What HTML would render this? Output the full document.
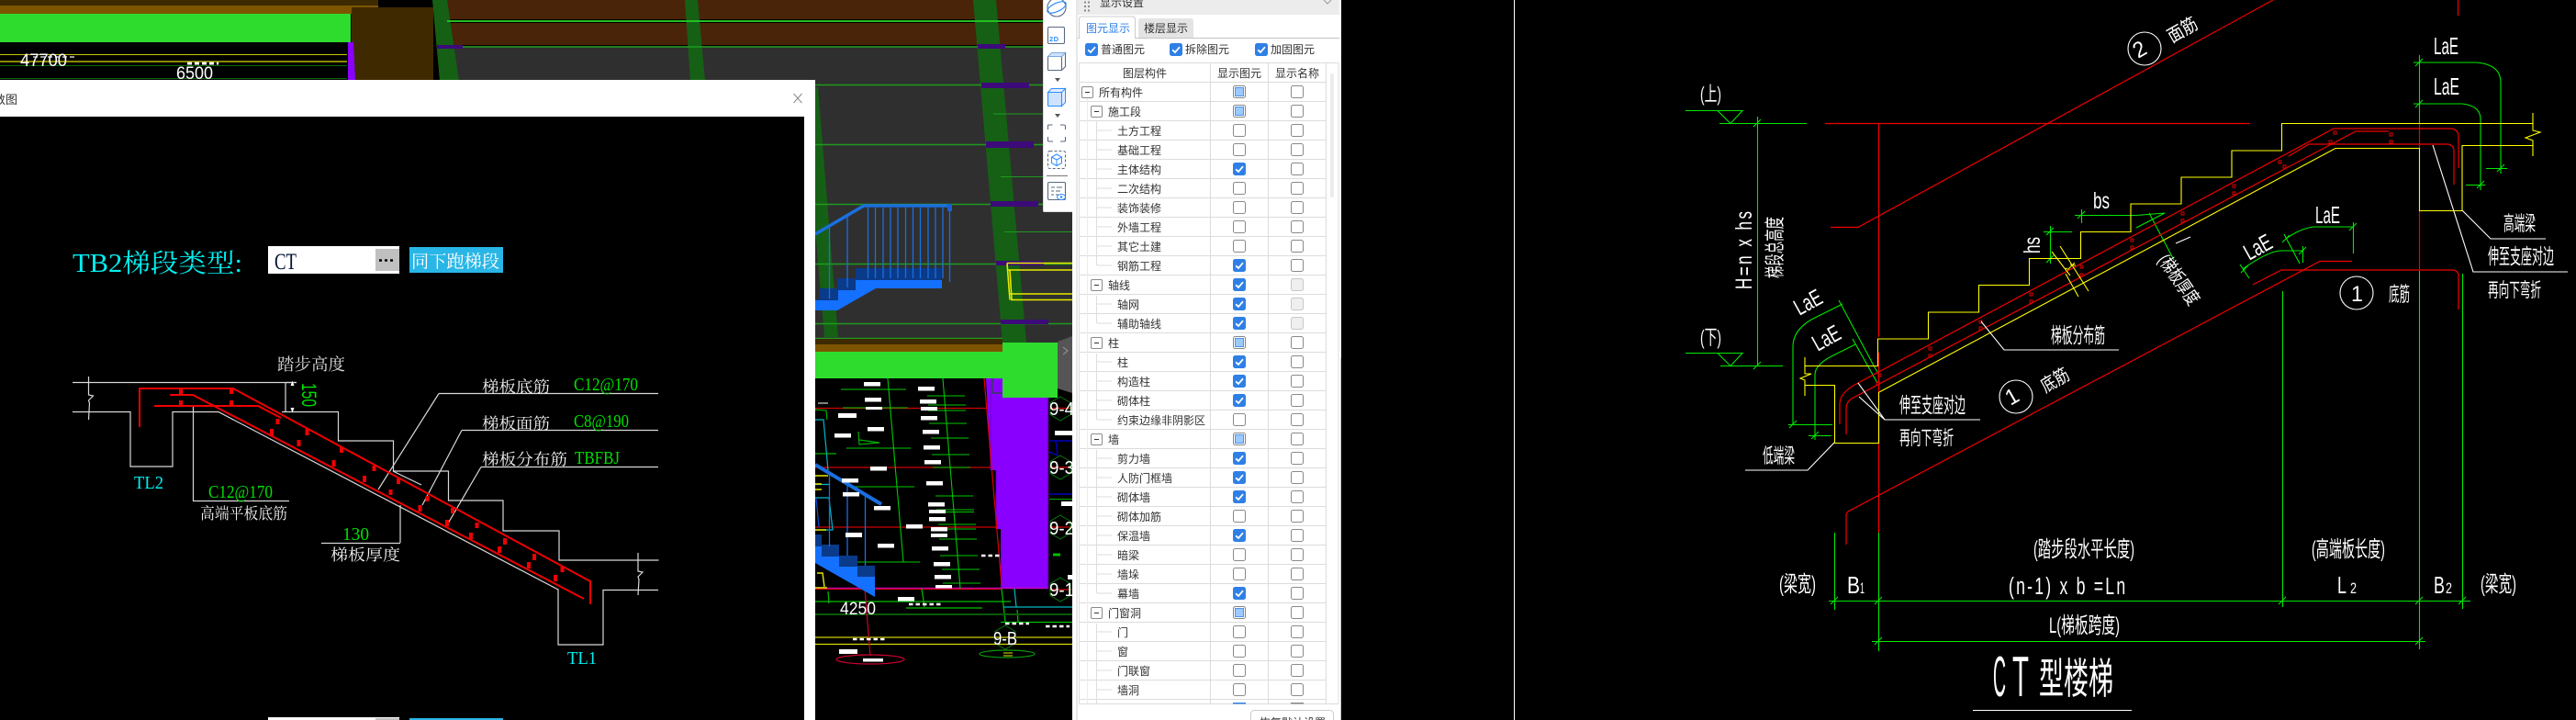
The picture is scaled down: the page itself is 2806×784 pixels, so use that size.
<!DOCTYPE html>
<html lang="zh"><head><meta charset="utf-8"><title>CT型楼梯</title>
<style>
html,body{margin:0;padding:0;background:#000;width:2806px;height:784px;overflow:hidden}
svg{display:block;position:absolute;left:0;top:0}
text{font-family:"Liberation Sans","Noto Sans CJK SC",sans-serif}
text.s,.s text{font-family:"Liberation Serif","Noto Serif CJK SC",serif}
.u{font-size:12px;fill:#333;font-family:"Liberation Sans","Noto Sans CJK SC",sans-serif}
.w{fill:#fff}
.g{fill:#00e000}
.c{fill:#00f0f0}
.n{fill:none}
</style></head><body>
<svg width="2806" height="784" viewBox="0 0 2806 784" xmlns="http://www.w3.org/2000/svg">
<defs>
<g id="cn"><rect x=".5" y=".5" width="13" height="13" rx="2" fill="#fff" stroke="#8a8a8a"/></g>
<g id="cy"><rect x=".5" y=".5" width="13" height="13" rx="2" fill="#2f80e6" stroke="#2f80e6"/><path d="M3.2 7.3L6 10 11 4.2" fill="none" stroke="#fff" stroke-width="1.8"/></g>
<g id="cp"><rect x=".5" y=".5" width="13" height="13" rx="2" fill="#fff" stroke="#858585"/><rect x="2.5" y="2.5" width="9" height="9" fill="#9ccaff" stroke="#4a94f0"/></g>
<g id="cd"><rect x=".5" y=".5" width="13" height="13" rx="2" fill="#efefef" stroke="#c8c8c8"/></g>
<g id="ex"><rect x=".5" y=".5" width="12" height="12" rx="1.5" fill="#fff" stroke="#8a8a8a"/><path d="M4 6.5h5" stroke="#333"/></g>
<polygon id="hex" points="0,-13 11,-6.5 11,6.5 0,13 -11,6.5 -11,-6.5" fill="none" stroke="#0a7a0a"/>
<pattern id="rows" x="0" y="89" width="10" height="21" patternUnits="userSpaceOnUse"><rect width="10" height="1" fill="#dcdcdc"/></pattern>
</defs>
<rect width="2806" height="784" fill="#000"/>

<!-- top-left 3D -->
<rect x="0" y="0" width="412" height="6" fill="#3d2a00"/>
<rect x="0" y="6" width="412" height="9" fill="#7d5500"/>
<rect x="0" y="15" width="382" height="31" fill="#2edc2e"/>
<rect x="383" y="8" width="89" height="80" fill="#3f2900"/>
<path d="M379 46h6l2 42h-8z" fill="#8a00ff"/>
<path d="M0 59.5h378" stroke="#c8c800"/><path d="M0 67h378" stroke="#8a8a00" stroke-width="2"/>
<path d="M0 71.5h378M0 85.5h378" stroke="#0a6a0a"/>
<text class="w" x="22" y="72" font-size="19" textLength="51" lengthAdjust="spacingAndGlyphs">47700</text>
<text class="w" x="192" y="86" font-size="19" textLength="40" lengthAdjust="spacingAndGlyphs">6500</text>
<path d="M204 69h34" stroke="#fff" stroke-width="3" stroke-dasharray="5 3"/>
<path d="M36 62h46" stroke="#fff" stroke-width="2" stroke-dasharray="5 3" opacity=".6"/>

<rect x="487" y="0" width="681" height="21" fill="#4a2408"/>
<rect x="487" y="25" width="681" height="24" fill="#4a2408"/>
<rect x="480" y="50" width="688" height="325" fill="#2f2f2f"/>
<path d="M471 0h16l13 88h-21z" fill="#156015"/>
<path d="M746 0h14l8 88h-16z" fill="#156015"/>
<path d="M888 95h3l22 272h-15l-10-117z" fill="#156015"/>
<path d="M1060 0h25l33 373h-26z" fill="#156015"/>
<path d="M487 23h681" stroke="#22c022" stroke-width="2"/>
<path d="M500 51h668M888 92.5h280M888 157.5h280M888 222.5h280M888 287.5h280M888 352.5h280M888 368.5h204" stroke="#1f9a1f" stroke-width="1.5"/>
<path d="M1082 124h86M1090 192.5h78M1094 252.5h74" stroke="#1f9a1f"/>
<g fill="#3d0a7a"><rect x="476" y="49" width="28" height="4"/><rect x="1065" y="48" width="30" height="5"/><rect x="1069" y="90" width="52" height="6"/><rect x="1074" y="154" width="52" height="7"/><rect x="1079" y="219" width="52" height="6"/><rect x="1085" y="284" width="52" height="5"/><rect x="1090" y="348" width="52" height="5"/></g>
<!-- stairs upper -->
<path d="M932 292h93v13h-93zM912 303h20v13h-20zM893 314h20v13h-20zM888 326h6v12h-6z" fill="#0a3a8a"/>
<path d="M932 305h94v9h-72l-42 24h-24v12h8v-12h-8v-11h25v-11h19z M888 338h8v12h-8z" fill="#1470ff"/>
<path d="M888 255L941 224H1037" fill="none" stroke="#1a6fe0" stroke-width="3.5"/>
<path d="M903.5 246V325M923 236V313M945.5 226V303M953.5 226V303M962 226V303M970 226V303M978 226V303M986.5 226V303M994.5 226V303M1002.5 226V303M1011 226V303M1019 226V303M1027 226V303M1034.5 226V307" stroke="#1a6fe0" stroke-width="1.3"/>
<rect x="1032" y="222" width="5" height="8" fill="#1a5fd0"/>
<path d="M1097 286.5h71M1098 294h70M1100 320h68M1101 326.5h67M1097 286.5l3 40M1100 294l2 32" fill="none" stroke="#e8e800" stroke-width="1.6"/>
<rect x="888" y="369" width="204" height="6" fill="#3d2a00"/>
<rect x="888" y="375" width="204" height="8" fill="#7d5500"/>
<rect x="888" y="383" width="204" height="29" fill="#2edc2e"/>
<rect x="1092" y="373" width="60" height="60" fill="#2edc2e"/>
<path d="M1152 372l16-6v62l-16-5z" fill="#555"/>
<path d="M1158 378l5 4-5 4" fill="none" stroke="#999"/>

<!-- lower CAD under the green band -->
<path d="M1074 412h18v21h50v207.5h-52V576h-5l0-64h-6z" fill="#8a00ff"/>
<path d="M1085 512v64M1091 576v64M1079 412v100" stroke="#6a00c8" stroke-width=".8"/>
<path d="M888 640.5h254" stroke="#c000c0" stroke-width="1.5"/>
<path d="M1142 433v208" stroke="#3a0060"/>
<path d="M888 444.5h186M888 509h191M888 574h197M888 641.5h202M1143 444.5h25M1143 509h25M1143 574h25M1143 642h25" stroke="#d00000" stroke-width="1.2"/>
<path d="M1072 412l19 225" stroke="#e00000" stroke-width="1.2"/>
<path d="M967 412l17 200M1027 412l19 229M916 424h71M918 444h71M922 488h70M930 530h66M930 612h72M1010 431h41M1011 441h41M1011 447h41M1012 461h41M1014 477h41M1015 495h41M1016 509h41M1019 540h41M1020 555h41M1020 557.500h41M1022 571h41M1022 576h41M1023 587h41M1024 605h41M1026 620h41M1027 635h41" fill="none" stroke="#00c800" stroke-width="1.1"/>
<path d="M888 655h213M987 662h83M1090 677.500h78M902 644l1 13M1004 641l3 20M1091 641l4 36M1108 664l1 13" fill="none" stroke="#00c000" stroke-width="1.2"/>
<path d="M888 669h280" stroke="#0a5a0a" stroke-width="2"/>
<path d="M1105 641l2 20M1093 661h75" fill="none" stroke="#00b8c8" stroke-width="1.2"/>
<path d="M888 694h280" stroke="#808000" stroke-width="2"/><path d="M888 701.500h280" stroke="#d8d800" stroke-width="1.2"/>
<path d="M942 641l6 73" stroke="#d00030" stroke-width="1.2"/>
<ellipse cx="948" cy="718" rx="37" ry="5" class="n" stroke="#d00030" stroke-width="1.2"/>
<ellipse cx="1097" cy="712" rx="30" ry="4" class="n" stroke="#0a9a0a" stroke-width="1.2"/>
<path d="M1093 711h10M1093 714h10" stroke="#e8e800"/>
<path d="M1081 412v16h10" fill="none" stroke="#0a5a0a"/>
<g class="n" stroke="#00b8c8" stroke-width="1.2"><path d="M888 457h9l5 55"/><path d="M888 527.500h15M888 542h15l4 35h-19"/></g>
<path d="M888 446l12 1 1 10M888 494h23M935 470l1 14 22-2-22-3" fill="none" stroke="#00b000" stroke-width="1.2"/>
<path d="M888 518h14M888 527h7M888 533h7M888 577h12M890 624h6l2 15M888 640h13" fill="none" stroke="#e8e800" stroke-width="1.4"/>
<path d="M889 542l3 32" stroke="#0a50e0" stroke-width="1.2"/>
<path d="M891 439h11" stroke="#fff"/>
<path d="M1143 480h25M1150 480l2 16M1143 492l9 4M1143 538h25" fill="none" stroke="#0000e0" stroke-width="1.2"/>
<path d="M1143 543.500h25" stroke="#00b000"/>
<path d="M1147 604h8" stroke="#00c000" stroke-width="3"/>
<!-- lower stairs -->
<path d="M888 582h7v13h-7zM895 593h19v13h-19zM914 605h20v12h-20zM934 616h19v12h-19z" fill="#0a3a8a"/>
<path d="M888 595h7v11h19v11h20v11h19v22l-65-37z" fill="#1470ff"/>
<path d="M888 506l72 43" stroke="#1a6fe0" stroke-width="4"/>
<path d="M903.500 516V595M923 528V605M942.500 540V616" stroke="#1a6fe0" stroke-width="1.3"/>
<path fill="#fff" d="M941 416h18v4.500h-18zM1000 421h18v4.500h-18zM942 433h18v4.500h-18zM1002 435h18v4.500h-18zM943 443h18v3h-18zM1003 443h18v4h-18zM913 450h20v5h-20zM1003 453h18v4.500h-18zM945 465h18v4.500h-18zM1005 468h18v4.500h-18zM909 472h18v4.500h-18zM1006 485h18v4.500h-18zM1007 501h18v4.500h-18zM948 508h18v4.500h-18zM917 521h18v4.500h-18zM1009 524h18v4.500h-18zM918 536h18v4.500h-18zM1011 547h18v4.500h-18zM952 551h18v4.500h-18zM1012 555h18v4h-18zM1012 563h18v4.500h-18zM987 571h18v4.500h-18zM1014 574h18v4.500h-18zM1014 581h18v4h-18zM921 580h18v5h-18zM956 592h18v4.500h-18zM1015 595h18v4.500h-18zM1017 612h18v4.500h-18zM1018 626h18v4.500h-18zM1019 637h18v3.500h-18zM978 650h18v4.500h-18zM914 707h20v5h-20zM940 717h22v3.500h-22zM1149 469h19v5h-19zM1156 546h12v5h-12zM1163 626h5v5h-5z"/>
<g stroke="#fff" stroke-width="2.500" stroke-dasharray="4.500 3" fill="none"><path d="M990 658h35M1069 605h20M929 696h35M1095 679h26M1139 682h26"/></g>
<text class="w" x="915" y="669" font-size="19" textLength="39" lengthAdjust="spacingAndGlyphs">4250</text>
<use href="#hex" x="1155" y="445"/><use href="#hex" x="1155" y="509"/><use href="#hex" x="1155" y="574"/><use href="#hex" x="1155" y="642"/><use href="#hex" x="1095" y="694"/>
<text class="w" x="1082" y="702" font-size="20" textLength="26" lengthAdjust="spacingAndGlyphs">9-B</text>
<text class="w" x="1143" y="452" font-size="20" textLength="27" lengthAdjust="spacingAndGlyphs">9-4</text>
<text class="w" x="1143" y="516" font-size="20" textLength="27" lengthAdjust="spacingAndGlyphs">9-3</text>
<text class="w" x="1143" y="582" font-size="20" textLength="27" lengthAdjust="spacingAndGlyphs">9-2</text>
<text class="w" x="1143" y="649" font-size="20" textLength="27" lengthAdjust="spacingAndGlyphs">9-1</text>

<!-- dialog -->
<rect x="0" y="87" width="888" height="697" fill="#fff"/>
<rect x="0" y="127" width="876" height="657" fill="#000"/>
<text x="-7" y="113" font-size="13" fill="#333">数图</text>
<path d="M864.500 102l9 10M873.500 102l-9 10" stroke="#888"/>
<text class="s c" x="79" y="296" font-size="28" textLength="185" lengthAdjust="spacingAndGlyphs">TB2梯段类型:</text>
<rect x="292" y="268" width="143" height="30" fill="#fff"/>
<text class="s" x="299" y="293" font-size="25" fill="#013" textLength="24" lengthAdjust="spacingAndGlyphs">CT</text>
<rect x="409" y="271" width="26" height="24" fill="#c0c0c0"/>
<path d="M413 283.500h17" stroke="#000" stroke-width="2.500" stroke-dasharray="3 3"/>
<rect x="446" y="269" width="102" height="28" fill="#29b6e6"/>
<text class="s w" x="448" y="291" font-size="19" textLength="96" lengthAdjust="spacingAndGlyphs">同下跑梯段</text>
<text class="s" x="302" y="403" font-size="18" fill="#ddd" textLength="74" lengthAdjust="spacingAndGlyphs">踏步高度</text>

<g fill="none" stroke="#d8d8d8" stroke-width="1.200">
<path d="M79 416.500h244M79 448.500h63V508h46V448.500h50L608 642v60h49V642.500h60"/>
<path d="M307 448.500h61.500V480h60v33h60v32h59.500v33h61v32h108.500"/>
<path d="M96.500 410v20l5 1-5 5 1 3-1 18M695 602v20l5 1-5 5 1 3-1 17"/>
<path d="M311 416v32M323 416.500h-12"/>
<path d="M478 428.500h239M478 428.500L412 533M503 468.500h214M503 468.500L460 550M524 508.500h193M524 508.500L488 570M428 513l31 15M436 550v41M350 591.500h86M210.500 442v103.500H315"/>
</g>
<path d="M317 420l1.500-4 1.500 4M317 444l1.500 4 1.500-4" fill="#fff" stroke="#fff"/>
<g fill="none" stroke="#f00000" stroke-width="2">
<path d="M152 465V423h102L643 633v25"/>
<path d="M185 430h25L636 652"/>
<path d="M168 442h113l25 13"/>
</g>
<path fill="#f00000" d="M195 423h4v6h-4zM250 423h4v6h-4zM195 436h4v6h-4zM250 436h4v6h-4zM300.500 456h4v6h-4zM294 467h4v7h-4zM332.500 467h4v7h-4zM323.500 479h4v7h-4zM370 487h4v6h-4zM361.500 501h4v7h-4zM405.500 507h4v6h-4zM395 518h4v7h-4zM432 521h4v6h-4zM423.500 533h4v6h-4zM463.500 540h4v6h-4zM455.500 550h4v7h-4zM491 553h4v6h-4zM485 566h4v7h-4zM517.500 569h4v6h-4zM511 580h4v7h-4zM548 586h4v7h-4zM542 595h4v7h-4zM580 603h4v7h-4zM574 612h4v7h-4zM610.500 617h4v6h-4zM603 626h4v7h-4z"/>
<text class="g" transform="translate(329 417) rotate(90)" font-size="22" textLength="26" lengthAdjust="spacingAndGlyphs">150</text>
<g class="s">
<text x="525" y="427" font-size="17" fill="#eee" textLength="74" lengthAdjust="spacingAndGlyphs">梯板底筋</text>
<text class="g" x="625" y="425" font-size="20" textLength="70" lengthAdjust="spacingAndGlyphs">C12@170</text>
<text x="525" y="467" font-size="17" fill="#eee" textLength="74" lengthAdjust="spacingAndGlyphs">梯板面筋</text>
<text class="g" x="625" y="465" font-size="20" textLength="60" lengthAdjust="spacingAndGlyphs">C8@190</text>
<text x="525" y="506" font-size="17" fill="#eee" textLength="93" lengthAdjust="spacingAndGlyphs">梯板分布筋</text>
<text class="g" x="626" y="505" font-size="20" textLength="49" lengthAdjust="spacingAndGlyphs">TBFBJ</text>
<text class="c" x="146" y="532" font-size="20" textLength="32" lengthAdjust="spacingAndGlyphs">TL2</text>
<text class="g" x="227" y="542" font-size="20" textLength="70" lengthAdjust="spacingAndGlyphs">C12@170</text>
<text x="218" y="565" font-size="17" fill="#eee" textLength="95" lengthAdjust="spacingAndGlyphs">高端平板底筋</text>
<text class="g" x="373" y="588" font-size="20" textLength="29" lengthAdjust="spacingAndGlyphs">130</text>
<text x="360" y="610" font-size="17" fill="#eee" textLength="76" lengthAdjust="spacingAndGlyphs">梯板厚度</text>
<text class="c" x="618" y="723" font-size="20" textLength="32" lengthAdjust="spacingAndGlyphs">TL1</text>
<text class="c" x="133" y="808" font-size="28" textLength="114" lengthAdjust="spacingAndGlyphs">TB2梯段</text>
</g>
<rect x="292" y="781" width="143" height="3" fill="#fff"/><rect x="409" y="782" width="26" height="2" fill="#c0c0c0"/><rect x="446" y="782" width="102" height="2" fill="#29b6e6"/>

<!-- toolbar -->
<path d="M1136 0h32v229q0 2-2 2h-28q-2 0-2-2z" fill="#fff"/>
<path d="M1136.500 0v229q0 1.500 1.500 1.500h30" fill="none" stroke="#ddd"/>
<g fill="none" stroke="#5a6a80" stroke-width="1.100">
<circle cx="1151" cy="8" r="10"/>
<rect x="1141.500" y="29.500" width="18" height="18" rx="1.500"/>
<rect x="1141.500" y="61.500" width="15" height="15" rx="1"/>
<path d="M1156.500 61.500l4-4v15l-4 4"/>
<path d="M1141.500 141v-4q0-1 1-1h4M1155 136h4q1 0 1.500 1v4M1160.500 149v4q0 1-1.500 1h-4M1147 154h-4q-1.500 0-1.500-1v-4"/>
<rect x="1141.500" y="164.500" width="19" height="19" rx="2" stroke-dasharray="3 2"/>
<rect x="1141.500" y="198.500" width="19" height="19" rx="1.500"/>
<path d="M1145 204h4M1151 204h6M1145 208h3M1150 208h5M1145 212h3M1150 212h3"/>
</g>
<ellipse cx="1151" cy="8" rx="11" ry="4.500" transform="rotate(-25 1151 8)" fill="none" stroke="#2d8cff" stroke-width="1.200"/>
<text x="1143" y="45" font-size="7.500" font-weight="700" fill="#2d8cff" textLength="10">2D</text>
<path d="M1141.500 61.500l4-4h15l-4 4z" fill="#cfe3ff" stroke="#7aa9e0"/>
<path d="M1149 85h6l-3 4z M1149 124h6l-3 4z" fill="#555"/>
<rect x="1141.500" y="100.500" width="15" height="15" rx="1" fill="#cfe3ff" stroke="#2d8cff" stroke-width="1.100"/>
<path d="M1141.500 100.500l4-4h15l-4 4zM1156.500 100.500l4-4v15l-4 4z" fill="#e4efff" stroke="#2d8cff"/>
<path d="M1151 168l5.500 3v6.500l-5.500 3-5.500-3V171zM1145.500 171l5.500 3 5.500-3M1151 174v6.500" fill="none" stroke="#2d8cff"/>
<path d="M1140 191.500h23" stroke="#777"/>
<ellipse cx="1156" cy="214.500" rx="4.500" ry="3" fill="#fff" stroke="#2d8cff"/><circle cx="1156" cy="214.500" r="1.300" fill="#2d8cff"/>

<!-- panel -->
<rect x="1168" y="0" width="293" height="784" fill="#fff"/>
<path d="M1173 0v784" stroke="#cfcfcf"/>
<path d="M1460.500 390V784" stroke="#c8c8c8"/>
<rect x="1174" y="0" width="285" height="16" fill="#ececec"/>
<path d="M1181 2.500h6M1181 7h6M1181 11.500h6" stroke="#888" stroke-width="2" stroke-dasharray="2 2"/>
<text x="1198" y="7" class="u">显示设置</text>
<path d="M1442 0l4 4 4-4" fill="none" stroke="#999"/>
<path d="M1175.500 41V21q0-3 3-3h55q3 0 3 3v20" fill="#fff" stroke="#ccc"/>
<path d="M1240 41V23q0-3 3-3h54q3 0 3 3v18z" fill="#e4e4e4"/>
<path d="M1174 41.500h2M1236 41.500h223" stroke="#c4c4c4"/>
<text x="1183" y="35" font-size="12" fill="#2f80e6">图元显示</text>
<text x="1246" y="35" class="u">楼层显示</text>
<use href="#cy" x="1182" y="47"/><text class="u" x="1199" y="58">普通图元</text>
<use href="#cy" x="1274" y="47"/><text class="u" x="1291" y="58">拆除图元</text>
<use href="#cy" x="1367" y="47"/><text class="u" x="1384" y="58">加固图元</text>

<rect x="1176" y="89" width="268" height="677" fill="url(#rows)"/>
<rect x="1175.500" y="68.500" width="282.500" height="698" fill="none" stroke="#dcdcdc"/>
<path d="M1318.500 68v698M1381.500 68v698M1444.500 68v698" stroke="#dcdcdc"/>
<rect x="1449" y="80" width="4" height="135" rx="2" fill="#ebebeb"/>
<path d="M1184.500 100V766" stroke="#ececec"/>
<path d="M1194.500 131V289M1194.500 322V352M1194.500 385V457M1194.500 490V646M1194.500 679V766M1195 142h16M1195 163h16M1195 184h16M1195 205h16M1195 226h16M1195 247h16M1195 268h16M1195 289h16M1195 331h16M1195 352h16M1195 394h16M1195 415h16M1195 436h16M1195 457h16M1195 499h16M1195 520h16M1195 541h16M1195 562h16M1195 583h16M1195 604h16M1195 625h16M1195 646h16M1195 688h16M1195 709h16M1195 730h16M1195 751h16" stroke="#dedede" fill="none"/>
<text class="u" x="1223" y="84">图层构件</text><text class="u" x="1326" y="84">显示图元</text><text class="u" x="1389" y="84">显示名称</text>
<use href="#ex" x="1178" y="94"/><use href="#ex" x="1188" y="115"/><use href="#ex" x="1188" y="304"/><use href="#ex" x="1188" y="367"/><use href="#ex" x="1188" y="472"/><use href="#ex" x="1188" y="661"/>
<text class="u" x="1197" y="105">所有构件</text><use href="#cp" x="1343" y="93"/><use href="#cn" x="1406" y="93"/>
<text class="u" x="1207" y="126">施工段</text><use href="#cp" x="1343" y="114"/><use href="#cn" x="1406" y="114"/>
<text class="u" x="1217" y="147">土方工程</text><use href="#cn" x="1343" y="135"/><use href="#cn" x="1406" y="135"/>
<text class="u" x="1217" y="168">基础工程</text><use href="#cn" x="1343" y="156"/><use href="#cn" x="1406" y="156"/>
<text class="u" x="1217" y="189">主体结构</text><use href="#cy" x="1343" y="177"/><use href="#cn" x="1406" y="177"/>
<text class="u" x="1217" y="210">二次结构</text><use href="#cn" x="1343" y="198"/><use href="#cn" x="1406" y="198"/>
<text class="u" x="1217" y="231">装饰装修</text><use href="#cn" x="1343" y="219"/><use href="#cn" x="1406" y="219"/>
<text class="u" x="1217" y="252">外墙工程</text><use href="#cn" x="1343" y="240"/><use href="#cn" x="1406" y="240"/>
<text class="u" x="1217" y="273">其它土建</text><use href="#cn" x="1343" y="261"/><use href="#cn" x="1406" y="261"/>
<text class="u" x="1217" y="294">钢筋工程</text><use href="#cy" x="1343" y="282"/><use href="#cn" x="1406" y="282"/>
<text class="u" x="1207" y="315">轴线</text><use href="#cy" x="1343" y="303"/><use href="#cd" x="1406" y="303"/>
<text class="u" x="1217" y="336">轴网</text><use href="#cy" x="1343" y="324"/><use href="#cd" x="1406" y="324"/>
<text class="u" x="1217" y="357">辅助轴线</text><use href="#cy" x="1343" y="345"/><use href="#cd" x="1406" y="345"/>
<text class="u" x="1207" y="378">柱</text><use href="#cp" x="1343" y="366"/><use href="#cn" x="1406" y="366"/>
<text class="u" x="1217" y="399">柱</text><use href="#cy" x="1343" y="387"/><use href="#cn" x="1406" y="387"/>
<text class="u" x="1217" y="420">构造柱</text><use href="#cy" x="1343" y="408"/><use href="#cn" x="1406" y="408"/>
<text class="u" x="1217" y="441">砌体柱</text><use href="#cy" x="1343" y="429"/><use href="#cn" x="1406" y="429"/>
<text class="u" x="1217" y="462">约束边缘非阴影区</text><use href="#cn" x="1343" y="450"/><use href="#cn" x="1406" y="450"/>
<text class="u" x="1207" y="483">墙</text><use href="#cp" x="1343" y="471"/><use href="#cn" x="1406" y="471"/>
<text class="u" x="1217" y="504">剪力墙</text><use href="#cy" x="1343" y="492"/><use href="#cn" x="1406" y="492"/>
<text class="u" x="1217" y="525">人防门框墙</text><use href="#cy" x="1343" y="513"/><use href="#cn" x="1406" y="513"/>
<text class="u" x="1217" y="546">砌体墙</text><use href="#cy" x="1343" y="534"/><use href="#cn" x="1406" y="534"/>
<text class="u" x="1217" y="567">砌体加筋</text><use href="#cn" x="1343" y="555"/><use href="#cn" x="1406" y="555"/>
<text class="u" x="1217" y="588">保温墙</text><use href="#cy" x="1343" y="576"/><use href="#cn" x="1406" y="576"/>
<text class="u" x="1217" y="609">暗梁</text><use href="#cn" x="1343" y="597"/><use href="#cn" x="1406" y="597"/>
<text class="u" x="1217" y="630">墙垛</text><use href="#cn" x="1343" y="618"/><use href="#cn" x="1406" y="618"/>
<text class="u" x="1217" y="651">幕墙</text><use href="#cy" x="1343" y="639"/><use href="#cn" x="1406" y="639"/>
<text class="u" x="1207" y="672">门窗洞</text><use href="#cp" x="1343" y="660"/><use href="#cn" x="1406" y="660"/>
<text class="u" x="1217" y="693">门</text><use href="#cn" x="1343" y="681"/><use href="#cn" x="1406" y="681"/>
<text class="u" x="1217" y="714">窗</text><use href="#cn" x="1343" y="702"/><use href="#cn" x="1406" y="702"/>
<text class="u" x="1217" y="735">门联窗</text><use href="#cn" x="1343" y="723"/><use href="#cn" x="1406" y="723"/>
<text class="u" x="1217" y="756">墙洞</text><use href="#cn" x="1343" y="744"/><use href="#cn" x="1406" y="744"/>
<rect x="1343" y="765" width="14" height="1.500" fill="#2f80e6"/><rect x="1406" y="765" width="14" height="1.500" fill="#8a8a8a"/>
<rect x="1362.500" y="773.500" width="90" height="24" rx="4" fill="#fff" stroke="#ccc"/>
<text class="u" x="1372" y="791">恢复默认设置</text>

<!-- divider -->
<rect x="1649" y="0" width="1" height="784" fill="#fff"/>

<!-- right CAD: green -->
<g fill="none" stroke="#00e800" stroke-width="1.100">
<path d="M1836 120.500h62l-13 14-14-14M1873 134.500h95M1914.500 127V398M1874 398.500h68"/>
<path d="M1836 384.500h62l-13 14-14-14"/>
<path d="M2003 327l39 73 3 5M2018 369l27 48"/>
<path d="M2007 331l-34 17q-20 12-20 29V462M1948 462.500h48M2021 375l-28 14q-16 9-16 19V479M1970 474.500h25"/>
<path d="M2260 234.500h67l31-2.500M2267.500 228v15M2233.500 246v41M2226 252.500h31M2327 248l31-16M2341 232l27 51"/>
<path d="M2629 68h68q27 2 27 22V189M2708 183.500h23M2629 113h53q20 2 20 17V207M2686 201.500h21"/>
<path d="M2635.500 60V134M2635.500 295V707M2486.500 317V661M2682.500 298V663M1998.500 580V664M2046.500 580V709"/>
<path d="M1992 654.500H2691M2039 698.500H2642"/>
<path d="M2563.500 242V276M2563 247h-43q-15 2-30 13M2488 255l17 32M2508.500 268V286M2508 273h-25q-15 2-40 20M2440 288l10 15"/>
<path d="M1910 138l8-8M1910 402l8-8M2263 238l8-8M2229 256l8-8M2229 286l8-8M2631 72l8-8M2631 117l8-8M2720 187l8-8M2698 205l8-8M2559 251l8-8M2486 264l8-8M2504 277l8-8M2441 297l8-8M2482 658l8-8M2631 658l8-8M2678 658l8-8M1994 658l8-8M2042 658l8-8M2042 702l8-8M2631 702l8-8M1949 466l8-8M1973 478l8-8"/>
</g>
<!-- right CAD: red -->
<g fill="none" stroke="#f00000" stroke-width="1.200">
<path d="M1988 134.500H2451M2046.500 134V367M2046.500 384V580M1994 247.500h30L2476 0"/>
<path d="M2678 183V147q-1-6-8-7H2542L2024 417q-20 10-20 23V462"/>
<path d="M2602 143h-36L2017 434q-6 4-6 11V473"/>
<path d="M2673 201V163q-1-5-6-6H2515l-22 13"/>
<path d="M2454 310l31-16H2672q6 1 6 6V337"/>
<path d="M2562 284.500h-35L2013 557q-2 2-2 5V593"/>
<path d="M2677.500 0V17M2635.500 134V161M2635.500 229V294"/>
</g>
<g fill="none" stroke="#f00000" stroke-width=".9"><path d="M2542 143h3v3h-3zM2537 153h3v3h-3zM2603 145h3v3h-3zM2603 153h3v3h-3zM2482 175h3v3h-3zM2487 180h3v3h-3zM2432 201h3v3h-3zM2432 209h3v3h-3zM2376 231h3v3h-3zM2376 239h3v3h-3zM2321 260h3v3h-3zM2321 268h3v3h-3zM2266 289h3v3h-3zM2266 298h3v3h-3zM2211 319h3v3h-3zM2211 327h3v3h-3zM2156 349h3v3h-3zM2156 356h3v3h-3zM2101 378h3v3h-3zM2101 386h3v3h-3zM2046 407h3v3h-3zM2044 416h3v3h-3z"/></g>
<!-- right CAD: yellow -->
<g fill="none" stroke="#ffff00" stroke-width="1.100">
<path d="M1966 398.500h79.500V369h55V340h55V310.500h55V281.500h56V252.500h54.500V222h55V193h55V164h54.500V134.500H2759"/>
<path d="M2759 123V142l8 2-16 6 8 3V170M2759 158.500h-77V229.500H2635.500V161.500H2544L2047 427M2046.500 427V482.500H1998.500V419.500H1966M1966 389V407h7l-12 5 5 2V431"/>
<path d="M2235 274l20 26M2244 268l31 49M2250 298l14 25M2252 294l8-8M2255 288l6 1M2252 292l-3 1"/>
</g>
<!-- right CAD: white lines -->
<g fill="none" stroke="#fff" stroke-width="1.100">
<circle cx="2336" cy="53" r="18"/><circle cx="2567" cy="319" r="18"/><circle cx="2196" cy="432" r="18"/>
<path d="M2158 350l25 31H2308M2682 229l31 31h60M2650 158l44 138H2797M2024 417l29 40H2157M2025 432l28 25M1998 482l-29 30h-68M2149 773.500H2322M2370 265l16-7"/>
</g>
<!-- right CAD text -->
<g class="w">
<text x="1852" y="110" font-size="22" textLength="23" lengthAdjust="spacingAndGlyphs">(上)</text>
<text x="1852" y="375" font-size="22" textLength="23" lengthAdjust="spacingAndGlyphs">(下)</text>
<text transform="translate(1908 315) rotate(-90) scale(.68 1)" font-size="25" textLength="125">H=n x hs</text>
<text transform="translate(1941 303) rotate(-90)" font-size="22" textLength="67" lengthAdjust="spacingAndGlyphs">梯段总高度</text>
<text transform="translate(1960 344) rotate(-29)" font-size="25" textLength="31" lengthAdjust="spacingAndGlyphs">LaE</text>
<text transform="translate(1980 383) rotate(-29)" font-size="25" textLength="31" lengthAdjust="spacingAndGlyphs">LaE</text>
<text transform="translate(2450 284) rotate(-29)" font-size="25" textLength="31" lengthAdjust="spacingAndGlyphs">LaE</text>
<text x="2651" y="59" font-size="26" textLength="27" lengthAdjust="spacingAndGlyphs">LaE</text>
<text x="2651" y="103" font-size="26" textLength="28" lengthAdjust="spacingAndGlyphs">LaE</text>
<text x="2522" y="243" font-size="26" textLength="27" lengthAdjust="spacingAndGlyphs">LaE</text>
<text x="2280" y="227" font-size="25" textLength="18" lengthAdjust="spacingAndGlyphs">bs</text>
<text transform="translate(2222 276) rotate(-90)" font-size="25" textLength="18" lengthAdjust="spacingAndGlyphs">hs</text>
<text x="2234" y="373" font-size="23" textLength="59" lengthAdjust="spacingAndGlyphs">梯板分布筋</text>
<text transform="translate(2329 64) rotate(-30)" font-size="24" textLength="13" lengthAdjust="spacingAndGlyphs">2</text>
<text transform="translate(2190 442) rotate(-30)" font-size="24" textLength="13" lengthAdjust="spacingAndGlyphs">1</text>
<text x="2561" y="328" font-size="24" textLength="13" lengthAdjust="spacingAndGlyphs">1</text>
<text transform="translate(2366 47) rotate(-30)" font-size="20" textLength="34" lengthAdjust="spacingAndGlyphs">面筋</text>
<text transform="translate(2228 428) rotate(-30)" font-size="20" textLength="32" lengthAdjust="spacingAndGlyphs">底筋</text>
<text x="2602" y="328" font-size="22" textLength="23" lengthAdjust="spacingAndGlyphs">底筋</text>
<text transform="translate(2350 283) rotate(55)" font-size="20" textLength="62" lengthAdjust="spacingAndGlyphs">(梯板厚度</text>
<text x="2727" y="251" font-size="22" textLength="35" lengthAdjust="spacingAndGlyphs">高端梁</text>
<text x="2710" y="287" font-size="23" textLength="72" lengthAdjust="spacingAndGlyphs">伸至支座对边</text>
<text x="2710" y="323" font-size="21" textLength="58" lengthAdjust="spacingAndGlyphs">再向下弯折</text>
<text x="2069" y="449" font-size="23" textLength="72" lengthAdjust="spacingAndGlyphs">伸至支座对边</text>
<text x="2069" y="484" font-size="21" textLength="59" lengthAdjust="spacingAndGlyphs">再向下弯折</text>
<text x="1920" y="504" font-size="22" textLength="35" lengthAdjust="spacingAndGlyphs">低端梁</text>
<text x="1938" y="644" font-size="24" textLength="40" lengthAdjust="spacingAndGlyphs">(梁宽)</text>
<text x="2012" y="646" font-size="26" textLength="14" lengthAdjust="spacingAndGlyphs">B</text><text x="2026" y="646" font-size="17" textLength="5" lengthAdjust="spacingAndGlyphs">1</text>
<text x="2215" y="606" font-size="24" textLength="110" lengthAdjust="spacingAndGlyphs">(踏步段水平长度)</text>
<text transform="translate(2188 647) scale(.68 1)" font-size="26" textLength="187">(n-1) x b =Ln</text>
<text x="2232" y="689" font-size="24" textLength="77" lengthAdjust="spacingAndGlyphs">L(梯板跨度)</text>
<text x="2171" y="758" font-size="62" textLength="14" lengthAdjust="spacingAndGlyphs">C</text>
<text x="2192" y="758" font-size="62" textLength="18" lengthAdjust="spacingAndGlyphs">T</text>
<text x="2221" y="755" font-size="46" textLength="81" lengthAdjust="spacingAndGlyphs">型楼梯</text>
<text x="2518" y="606" font-size="24" textLength="80" lengthAdjust="spacingAndGlyphs">(高端板长度)</text>
<text x="2546" y="646" font-size="26" textLength="10" lengthAdjust="spacingAndGlyphs">L</text><text x="2560" y="646" font-size="17" textLength="7" lengthAdjust="spacingAndGlyphs">2</text>
<text x="2651" y="646" font-size="26" textLength="12" lengthAdjust="spacingAndGlyphs">B</text><text x="2664" y="646" font-size="17" textLength="7" lengthAdjust="spacingAndGlyphs">2</text>
<text x="2702" y="644" font-size="24" textLength="39" lengthAdjust="spacingAndGlyphs">(梁宽)</text>
</g>
</svg>
</body></html>
